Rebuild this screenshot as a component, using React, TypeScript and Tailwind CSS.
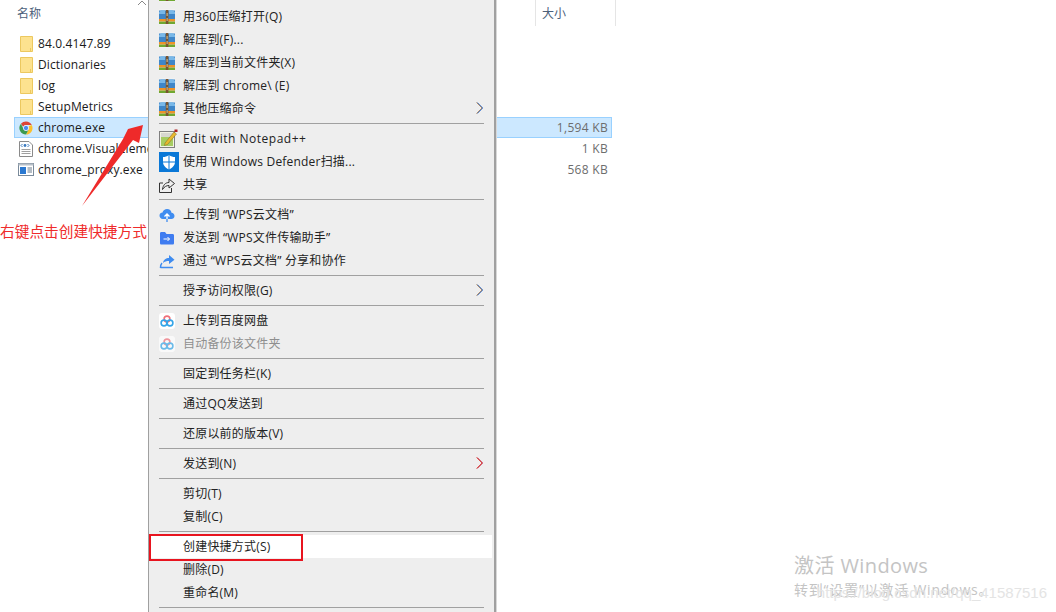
import React from "react";

function Zip() {
  return (
    <svg width="16" height="16" viewBox="0 0 16 16" className="shrink-0">
      <rect x="0" y="0.5" width="16" height="15" fill="#f4f4f4" />
      <path d="M0 1.5 H16 V10 H0Z" fill="#3f86c8" />
      <path d="M0 3 L2.5 1.2 H6 V5 H0Z M10 1.2 H13.5 L16 3 V5 H10Z" fill="#79b8e8" />
      <rect x="0" y="10" width="16" height="2.6" fill="#ee9228" />
      <rect x="0" y="12.6" width="16" height="2.4" fill="#6fa832" />
      <rect x="6.8" y="1" width="2.6" height="14" fill="#7a5530" />
      <rect x="7.6" y="4" width="1" height="3" fill="#d9c59a" />
      <rect x="7.6" y="9" width="1" height="3" fill="#d9c59a" />
    </svg>
  );
}

function Notepad() {
  return (
    <svg width="20" height="20" viewBox="0 0 20 20" className="shrink-0">
      <rect x="0.5" y="2.5" width="15" height="16" fill="#f2f2e4" stroke="#7f7f7f" />
      <path d="M2 8 H14 V17 H2Z" fill="#a6cc62" />
      <path d="M2 5 H14 M2 7 H14" stroke="#bdbdbd" />
      <path d="M6 14 L15 3 L17.5 5 L8.5 15.5 L5.5 16.5Z" fill="#e9b92e" stroke="#7a6420" strokeWidth="0.5" />
      <rect x="15.5" y="0.5" width="3" height="2.5" fill="#b02020" />
    </svg>
  );
}

function Shield() {
  return (
    <svg width="20" height="20" viewBox="0 0 20 20" className="shrink-0">
      <rect width="20" height="20" fill="#0a78d7" />
      <path d="M10 3 C8 4.5 6 5 4 5 V10 C4 13.5 7 16 10 17.5 C13 16 16 13.5 16 10 V5 C14 5 12 4.5 10 3Z" fill="#fff" />
      <path d="M9.5 3 H10.5 V18 H9.5Z M3.5 9.5 H16.5 V10.5 H3.5Z" fill="#0a78d7" />
    </svg>
  );
}

function Share() {
  return (
    <svg width="16" height="16" viewBox="0 0 16 16" className="shrink-0" fill="none" stroke="#333" strokeWidth="1">
      <path d="M0.5 6 V15.5 H12.5 V11" />
      <path d="M0.5 6 H4" />
      <path d="M3.5 12.5 C4 8 6.5 5.5 10 5.5 V2 L15.5 6.5 L10 11 V8.5 C7.5 8.5 5.5 9.5 3.5 12.5Z" />
    </svg>
  );
}

function WpsCloud() {
  return (
    <svg width="16" height="16" viewBox="0 0 16 16" className="shrink-0">
      <path d="M4 12 C1.5 12 0.5 10 0.5 8.5 C0.5 6.8 2 5.5 3.5 5.5 C4 3.5 6 2 8 2 C10.5 2 12.3 3.7 12.5 5.7 C14.2 5.9 15.5 7.2 15.5 9 C15.5 10.8 14 12 12.5 12Z" fill="#3f8cf0" />
      <path d="M8 12 V7.5 M5.5 9.5 L8 7 L10.5 9.5" stroke="#fff" strokeWidth="1.3" fill="none" />
      <path d="M8 12 V15" stroke="#3f8cf0" strokeWidth="1.3" />
    </svg>
  );
}

function WpsFolder() {
  return (
    <svg width="16" height="16" viewBox="0 0 16 16" className="shrink-0">
      <path d="M1 3.5 C1 2.5 1.5 2 2.5 2 H6 L7.5 4 H13.5 C14.5 4 15 4.5 15 5.5 V13 C15 14 14.5 14.5 13.5 14.5 H2.5 C1.5 14.5 1 14 1 13Z" fill="#3f7cf0" />
      <path d="M4.5 9 H10.5 M8.5 7 L10.5 9 L8.5 11" stroke="#fff" strokeWidth="1" fill="none" />
    </svg>
  );
}

function WpsShare() {
  return (
    <svg width="16" height="16" viewBox="0 0 16 16" className="shrink-0">
      <path d="M4 10 C4.5 6.5 7 5 10 5 V2 L15.5 6.8 L10 11 V8 C7.5 8 5.5 8.5 4 10Z" fill="#3f8cf0" />
      <path d="M1.5 15 C1.5 12.5 2 11 3 10 M1.5 14.5 H14" stroke="#3f8cf0" strokeWidth="1.5" fill="none" />
    </svg>
  );
}

function Baidu({ faded }: { faded?: boolean }) {
  return (
    <svg width="16" height="16" viewBox="0 0 16 16" className={faded ? "shrink-0 opacity-70" : "shrink-0"}>
      <rect width="16" height="16" rx="3" fill="#fff" />
      <circle cx="8" cy="6" r="2.9" fill="none" stroke="#f0707a" strokeWidth="1.6" />
      <circle cx="5" cy="10" r="2.9" fill="none" stroke="#35a5e8" strokeWidth="1.6" />
      <circle cx="11" cy="10" r="2.9" fill="none" stroke="#35a5e8" strokeWidth="1.6" />
    </svg>
  );
}

function Chevron({ red }: { red?: boolean }) {
  return (
    <svg width="8" height="12" viewBox="0 0 8 12" className="absolute right-[10px] top-[5px]" fill="none" strokeWidth="1">
      <path d="M0.6 0.5 L6 6 L0.6 11.5" stroke={red ? "#e8503a" : "#d08a3c"} />
      <path d="M1.3 0.5 L6.7 6 L1.3 11.5" stroke={red ? "#c04060" : "#2f6fd0"} />
    </svg>
  );
}

function Row({ icon, label, arrow, hot, muted, red, wide }: { icon?: React.ReactNode; label: string; arrow?: boolean; hot?: boolean; muted?: boolean; red?: boolean; wide?: boolean }) {
  return (
    <div className={`relative flex h-[23px] items-center pl-[10px] ${hot ? "mr-[2px] bg-white" : ""}`}>
      <div className="flex w-[24px] shrink-0 items-center">{icon}</div>
      <span className={`whitespace-nowrap text-[12px] ${wide ? "tracking-[0.5px]" : "tracking-[0.2px]"} ${muted ? "text-[#8f8f8f]" : "text-[#222222]"}`}>{label}</span>
      {arrow && <Chevron red={red} />}
    </div>
  );
}

function Sep() {
  return (
    <div className="px-[10px] py-[3px]">
      <div className="h-px bg-[#a0a0a0]" />
    </div>
  );
}

function Folder() {
  return (
    <svg width="13" height="16" viewBox="0 0 13 16" className="ml-[2px] shrink-0">
      <path d="M0.5 0.5 H12.5 V15.5 H0.5Z" fill="#fde28f" stroke="#ecc85f" />
      <path d="M10.5 12 V15.5" stroke="#ecc85f" />
    </svg>
  );
}

function Chrome() {
  return (
    <svg width="14" height="14" viewBox="0 0 16 16" className="ml-[1px] shrink-0">
      <path d="M8 0.5 A7.5 7.5 0 0 1 14.6 4.5 L8 4.5 A3.5 3.5 0 0 0 4.8 6.6 L2.2 3.2 A7.5 7.5 0 0 1 8 0.5Z" fill="#dc4437" />
      <path d="M14.6 4.5 A7.5 7.5 0 0 1 8 15.5 L11 9.8 A3.5 3.5 0 0 0 11 6 L14.6 4.5Z" fill="#fbc02d" />
      <path d="M8 15.5 A7.5 7.5 0 0 1 2.2 3.2 L5 8.8 A3.5 3.5 0 0 0 11 9.8Z" fill="#3c9a50" />
      <circle cx="8" cy="8" r="3" fill="#4a8af0" stroke="#fff" strokeWidth="0.8" />
    </svg>
  );
}

function Manifest() {
  return (
    <svg width="14" height="16" viewBox="0 0 14 16" className="ml-[1px] shrink-0">
      <path d="M0.5 0.5 H10 L13.5 4 V15.5 H0.5Z" fill="#fff" stroke="#8a8a8a" />
      <path d="M3.5 3 L2 4.5 L3.5 6 M8.5 3 L10 4.5 L8.5 6" stroke="#3a7ac0" fill="none" />
      <circle cx="6" cy="4.5" r="1.4" fill="#3a7ac0" />
      <path d="M2.5 8.5 H11.5 M2.5 10.5 H11.5 M2.5 12.5 H11.5" stroke="#a0a0a0" />
    </svg>
  );
}

function AppIcon() {
  return (
    <svg width="16" height="13" viewBox="0 0 16 13" className="shrink-0">
      <rect x="0.5" y="0.5" width="15" height="12" fill="#fff" stroke="#7a8a9a" />
      <rect x="0.5" y="0.5" width="15" height="2" fill="#b8c0c8" />
      <rect x="2" y="4" width="6" height="7" fill="#2a78d0" />
      <path d="M9.5 5 H14 M9.5 7 H14 M9.5 9 H14" stroke="#6a7a8a" />
    </svg>
  );
}

function FileRow({ icon, name, size, selected }: { icon: React.ReactNode; name: string; size?: string; selected?: boolean }) {
  return (
    <div className={`ml-[14px] flex h-[21px] w-[598px] items-center border pr-[3px] ${selected ? "border-[#99d1ff] bg-[#cce8ff]" : "border-transparent"}`}>
      <div className="flex w-[23px] shrink-0 pl-[3px]">{icon}</div>
      <span className="whitespace-nowrap text-[12px] tracking-[0.12px] text-[#1a1a1a]">{name}</span>
      <span className="ml-auto whitespace-nowrap text-[12px] tracking-[0.3px] text-[#6d6d6d]">{size}</span>
    </div>
  );
}

export default function App() {
  return (
    <div
      className="relative h-[612px] w-[1056px] overflow-hidden bg-white"
      style={{ fontFamily: '"Open Sans", "Noto Sans CJK SC", sans-serif' }}
    >
      {/* Explorer list */}
      <div className="flex h-[26px] items-center">
        <span className="ml-[17px] pt-[2px] text-[12px] text-[#4c607a]">名称</span>
        <div className="ml-[494px] flex h-full w-[81px] items-center border-x border-[#e5e5e5] pl-[6px] pt-[2px] text-[12px] text-[#4c607a]">大小</div>
      </div>
      <div className="pt-[7px]">
        <FileRow icon={<Folder />} name="84.0.4147.89" />
        <FileRow icon={<Folder />} name="Dictionaries" />
        <FileRow icon={<Folder />} name="log" />
        <FileRow icon={<Folder />} name="SetupMetrics" />
        <FileRow icon={<Chrome />} name="chrome.exe" size="1,594 KB" selected />
        <FileRow icon={<Manifest />} name="chrome.VisualElementsManifest.xml" size="1 KB" />
        <FileRow icon={<AppIcon />} name="chrome_proxy.exe" size="568 KB" />
      </div>

      {/* sort caret */}
      <svg width="10" height="6" viewBox="0 0 10 6" className="absolute left-[137px] top-0" fill="none" stroke="#888">
        <path d="M1 5 L5 1 L9 5" />
      </svg>

      {/* Annotation */}
      <div className="absolute left-0 top-[221px] whitespace-nowrap text-[14.7px] leading-[20px] text-[#ef2b2b]">右键点击创建快捷方式</div>

      {/* Context menu */}
      <div className="absolute left-[148px] top-0 h-[612px] w-[348px] overflow-hidden border-x-2 border-l-[1px] border-l-[#a0a0a0] border-r-[#a0a0a0] bg-[#eeeeee]">
        <div className="-mt-[18px]">
          <Row icon={<Zip />} label="添加到压缩文件(A)..." />
          <Row icon={<Zip />} label="用360压缩打开(Q)" />
          <Row icon={<Zip />} label="解压到(F)..." />
          <Row icon={<Zip />} label="解压到当前文件夹(X)" />
          <Row icon={<Zip />} label="解压到 chrome\ (E)" />
          <Row icon={<Zip />} label="其他压缩命令" arrow />
          <Sep />
          <Row icon={<Notepad />} label="Edit with Notepad++" wide />
          <Row icon={<Shield />} label="使用 Windows Defender扫描..." />
          <Row icon={<Share />} label="共享" />
          <Sep />
          <Row icon={<WpsCloud />} label="上传到 “WPS云文档”" />
          <Row icon={<WpsFolder />} label="发送到 “WPS文件传输助手”" />
          <Row icon={<WpsShare />} label="通过 “WPS云文档” 分享和协作" />
          <Sep />
          <Row label="授予访问权限(G)" arrow />
          <Sep />
          <Row icon={<Baidu />} label="上传到百度网盘" />
          <Row icon={<Baidu faded />} label="自动备份该文件夹" muted />
          <Sep />
          <Row label="固定到任务栏(K)" />
          <Sep />
          <Row label="通过QQ发送到" />
          <Sep />
          <Row label="还原以前的版本(V)" />
          <Sep />
          <Row label="发送到(N)" arrow red />
          <Sep />
          <Row label="剪切(T)" />
          <Row label="复制(C)" />
          <Sep />
          <Row label="创建快捷方式(S)" hot />
          <Row label="删除(D)" />
          <Row label="重命名(M)" />
          <Sep />
        </div>
      </div>
      <div className="absolute left-[496px] top-0 h-[612px] w-px bg-[#d8d8d8]" />

      {/* Red highlight box */}
      <div className="absolute left-[149px] top-[534px] h-[27px] w-[154px] border-2 border-[#e8141f]" />

      {/* Red arrow */}
      <svg width="80" height="95" viewBox="0 0 80 95" className="absolute left-[75px] top-[118px]">
        <path d="M7 88 L48 21 L53 11 L68 7 L64 25 L58 22Z" fill="#ee2a2a" />
      </svg>

      {/* Activation watermark */}
      <div className="absolute left-[794px] top-[552px] whitespace-nowrap text-[20px] leading-[28px] tracking-[0.4px] text-[#c4c4c4]">激活 Windows</div>
      <div className="absolute left-[794px] top-[580px] whitespace-nowrap text-[14px] leading-[20px] tracking-[0.8px] text-[#c4c4c4]">转到“设置”以激活 Windows。</div>
      <div className="absolute right-[9px] top-[583px] whitespace-nowrap text-[15px] leading-[20px] text-[#e4e4e4]" style={{ fontFamily: '"Liberation Sans", sans-serif' }}>https://blog.csdn.net/qq_41587516</div>
    </div>
  );
}
